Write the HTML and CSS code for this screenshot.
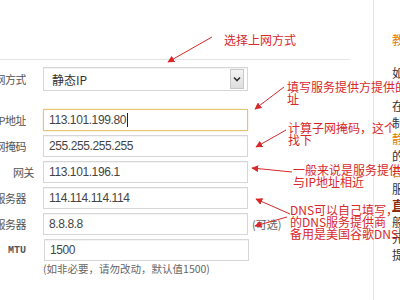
FILE: index.html
```html
<!DOCTYPE html>
<html lang="zh">
<head>
<meta charset="utf-8">
<link rel="stylesheet" href="styles.css">
</head>
<body>
<div class="page">
  <div class="main">
    <div class="top"></div>
    <div class="form">
      <div class="row row-select">
        <div class="label">上网方式</div>
        <div class="select"><span>静态IP</span><span class="drop"><svg width="8" height="6" viewBox="0 0 8 6"><path d="M1 1.5 L4 4.5 L7 1.5" fill="none" stroke="#333" stroke-width="1.6"/></svg></span></div>
      </div>
      <div class="row">
        <div class="label">IP地址</div>
        <div class="input focus">113.101.199.80<span class="caret"></span></div>
      </div>
      <div class="row">
        <div class="label">子网掩码</div>
        <div class="input">255.255.255.255</div>
      </div>
      <div class="row row-gw">
        <div class="label">网关</div>
        <div class="input">113.101.196.1</div>
      </div>
      <div class="row">
        <div class="label">首选DNS服务器</div>
        <div class="input">114.114.114.114</div>
      </div>
      <div class="row">
        <div class="label">备用DNS服务器</div>
        <div class="input">8.8.8.8</div>
        <div class="opt">(可选)</div>
      </div>
      <div class="row">
        <div class="label mtu">MTU</div>
        <div class="input">1500</div>
      </div>
      <div class="hint">(如非必要，请勿改动，默认值1500)</div>
    </div>
  </div>
  <div class="side">
    <div class="orange">教</div>
    <div>&nbsp;</div>
    <div>如</div>
    <div>&nbsp;</div>
    <div>在</div>
    <div>制</div>
    <div class="orange">静</div>
    <div>的</div>
    <div class="orange">自</div>
    <div>服</div>
    <div class="strong">直</div>
    <div>般</div>
    <div>元</div>
    <div>提</div>
  </div>

  <svg class="arrows" width="400" height="300" viewBox="0 0 400 300">
    <defs>
      <marker id="ah" viewBox="0 0 10 10" refX="9" refY="5" markerWidth="7" markerHeight="7" orient="auto" markerUnits="userSpaceOnUse">
        <path d="M0 0 L10 5 L0 10 Z" fill="#d8282a"/>
      </marker>
    </defs>
    <g stroke="#d8282a" stroke-width="1" fill="none" marker-end="url(#ah)">
      <line x1="212" y1="37" x2="168" y2="62"/>
      <line x1="284" y1="87" x2="255" y2="109"/>
      <line x1="286" y1="130" x2="256" y2="147"/>
      <line x1="292" y1="172" x2="252" y2="168"/>
      <line x1="290" y1="214" x2="256" y2="199"/>
      <line x1="287" y1="217" x2="255" y2="226"/>
    </g>
  </svg>

  <div class="note n1">选择上网方式</div>
  <div class="note n2">填写服务提供方提供的<br>址</div>
  <div class="note n3">计算子网掩码，这个<br>找下</div>
  <div class="note n4">一般来说是服务提供<br>与IP地址相近</div>
  <div class="note n5">DNS可以自己填写，<br>的DNS服务提供商<br>备用是美国谷歌DNS服</div>
</div>
</body>
</html>
```

FILE: styles.css
```css
html, body {
  margin: 0;
  padding: 0;
  background: #fff;
}
.page {
  position: relative;
  width: 400px;
  height: 300px;
  overflow: hidden;
  display: flex;
  font-family: "Noto Sans CJK SC", "Noto Sans", sans-serif;
}
.main {
  width: 373px;
  height: 300px;
  border-right: 1px solid #e4e4e4;
  flex: none;
}
.top {
  width: 350px;
  height: 59px;
  border-bottom: 1px solid #e6e6e6;
}
.form {
  display: flex;
  flex-direction: column;
  gap: 4px;
  padding-top: 7px;
}
.row {
  display: flex;
  align-items: center;
  gap: 17px;
  height: 22px;
}
.row-select {
  height: 24px;
  margin-bottom: 14px;
}
.row-gw {
  gap: 9px;
}
.row-gw .label {
  width: 34px;
}
.label {
  width: 26px;
  flex: none;
  display: flex;
  justify-content: flex-end;
  white-space: nowrap;
  overflow: hidden;
  font-size: 11px;
  letter-spacing: -0.5px;
  color: #555;
}
.label.mtu {
  font-family: "Liberation Mono", monospace;
  font-size: 10px;
  letter-spacing: 0;
  font-weight: bold;
  color: #555;
  padding-right: 1px;
}
.input, .select {
  box-sizing: border-box;
  width: 205px;
  height: 22px;
  border: 1px solid #d6d6d6;
  box-shadow: inset 0 1px 1px rgba(0,0,0,0.05);
  font-family: "Liberation Sans", Arial, sans-serif;
  font-size: 12px;
  letter-spacing: -0.4px;
  color: #444;
  display: flex;
  align-items: center;
  padding-left: 5px;
  flex: none;
}
.input.focus {
  border-color: #e6c46e;
  box-shadow: 0 0 2px rgba(230, 190, 90, 0.4);
}
.caret {
  display: inline-block;
  width: 1px;
  height: 14px;
  background: #222;
  margin-left: 1px;
}
.select {
  height: 24px;
  justify-content: space-between;
  padding-left: 8px;
  padding-right: 3px;
  font-family: "Noto Sans CJK SC", sans-serif;
  font-size: 12px;
  letter-spacing: 0;
  color: #333;
}
.drop {
  width: 12px;
  height: 18px;
  border: 1px solid #c8c8c8;
  background: linear-gradient(#f4f4f4, #dedede);
  display: flex;
  align-items: center;
  justify-content: center;
}
.opt {
  margin-left: -13px;
  font-size: 11px;
  color: #666;
}
.hint {
  padding-left: 43px;
  margin-top: -3px;
  font-size: 10.5px;
  line-height: 14px;
  color: #666;
}
.side {
  flex: 1;
  padding-left: 18px;
  padding-top: 32px;
  font-size: 12px;
  line-height: 16.5px;
  color: #333;
  white-space: nowrap;
}
.side .orange {
  color: #e0800a;
}
.side .strong {
  color: #8a2a10;
  font-weight: bold;
  text-decoration: underline;
}
.arrows {
  position: absolute;
  left: 0;
  top: 0;
  pointer-events: none;
}
.note {
  position: absolute;
  font-size: 12px;
  line-height: 12px;
  color: #d8282a;
  white-space: nowrap;
}
.n1 { left: 224px; top: 34px; }
.n2 { left: 287px; top: 81px; }
.n3 { left: 288px; top: 122px; }
.n4 { left: 293px; top: 164px; }
.n5 { left: 290px; top: 204px; }
```
